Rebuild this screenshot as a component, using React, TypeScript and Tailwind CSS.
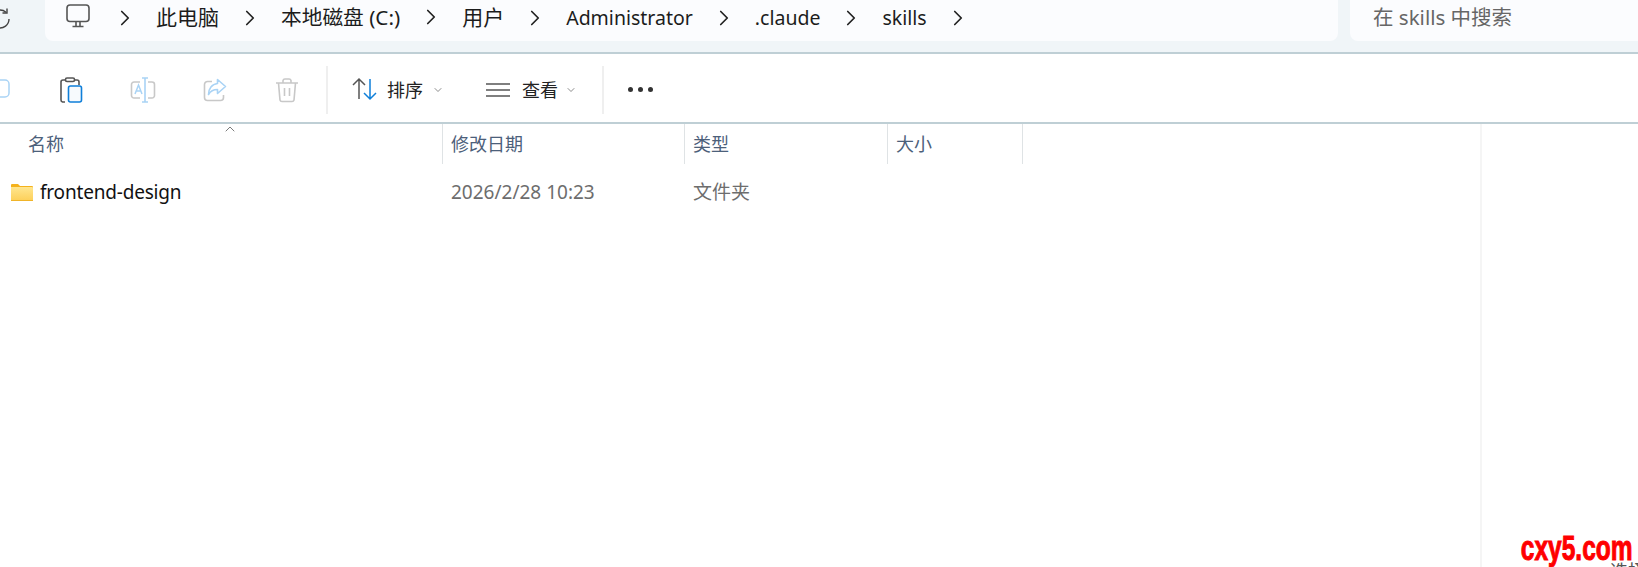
import { ChevronRight, ChevronDown, ChevronUp } from "lucide-react";

const crumbs = [
  { label: "此电脑", size: "text-[21px]" },
  { label: "本地磁盘 (C:)", size: "text-[20.700px]" },
  { label: "用户", size: "text-[21px]" },
  { label: "Administrator", size: "text-[19.500px]" },
  { label: ".claude", size: "text-[19.500px]" },
  { label: "skills", size: "text-[19.500px]" },
];

const columns = [
  { label: "修改日期", width: "w-[242px]" },
  { label: "类型", width: "w-[203px]" },
  { label: "大小", width: "w-[135px]" },
];

function Crumb() {
  return <ChevronRight className="w-[26px] h-[26px] -mx-[9px] text-[#222]" strokeWidth={1.6} />;
}

function ToolIcon({ children }: { children: React.ReactNode }) {
  return <svg width="26" height="26" viewBox="0 0 26 26" fill="none" strokeWidth="1.6">{children}</svg>;
}

export default function App() {
  return (
    <div className="relative w-[1638px] h-[567px] overflow-hidden bg-white flex flex-col font-['Noto_Sans','Noto_Sans_CJK_SC',sans-serif]">
      {/* address bar */}
      <div className="h-[54px] shrink-0 flex bg-[#f0f5f8] border-b-2 border-[#bfcfd5] pb-[11px]">
        <div className="w-[45px] shrink-0 overflow-hidden flex items-center">
          <svg width="26" height="26" viewBox="0 0 26 26" fill="none" stroke="#444" strokeWidth="1.4" className="-ml-[13px] mb-[3px]">
            <path d="M22 13a9 9 0 1 1-3-6.700" />
            <path d="M20 2.500v4.500h-4.500" />
          </svg>
        </div>
        <div className="w-[1293px] shrink-0 flex items-center gap-[27px] pl-[21px] pb-[6px] bg-[#fbfcfe] rounded-b-lg text-[#1c1c1c]">
          <svg width="24" height="24" viewBox="0 0 24 24" fill="none" stroke="#555" strokeWidth="1.600" className="mr-[4px] mb-[3px]">
            <rect x="1" y="1" width="22" height="16.500" rx="3" />
            <path d="M10 17.500v4.500M14 17.500v4.500M6.500 22.500h11" />
          </svg>
          <Crumb />
          {crumbs.map((c) => (
            <div key={c.label} className="flex items-center gap-[27px]">
              <span className={c.size}>{c.label}</span>
              <Crumb />
            </div>
          ))}
        </div>
        <div className="flex-1 ml-3 flex items-center pl-[23px] pb-[7px] bg-[#fbfcfe] rounded-bl-lg text-[20.500px] text-[#666]">
          在 skills 中搜索
        </div>
      </div>

      {/* command bar */}
      <div className="h-[70px] shrink-0 flex items-center pt-[3px] border-b-2 border-[#bfcfd5] text-[18px] text-[#222]">
        <div className="w-[328px] shrink-0 flex items-center overflow-hidden gap-[46px] pl-[58px] relative h-[48px] border-r-2 border-[#efefef]">
          <svg width="26" height="26" viewBox="0 0 26 26" fill="none" stroke="#a9d3f5" strokeWidth="1.5" className="absolute -left-[16px] top-[11px]">
            <rect x="4" y="3" width="21" height="17" rx="4" />
            <path d="M8 20v4" stroke="#ccc" />
          </svg>
          <ToolIcon>
            <path d="M7 25H4.500A2 2 0 0 1 3 23V5a2 2 0 0 1 2-2h14a2 2 0 0 1 2 2v3" stroke="#555" />
            <rect x="7.500" y="1" width="9" height="3.500" rx="1.500" stroke="#555" fill="#fff" />
            <rect x="10.500" y="9" width="13" height="16" rx="2" stroke="#0f7fd9" fill="#f7fafd" />
          </ToolIcon>
          <ToolIcon>
            <path d="M10 5H4a2.500 2.500 0 0 0-2.500 2.500v11A2.500 2.500 0 0 0 4 21h6M18 5h4a2.500 2.500 0 0 1 2.500 2.500v11A2.500 2.500 0 0 1 22 21h-4" stroke="#c8c8c8" />
            <path d="M15 1v24M12 1h6M12 25h6" stroke="#a9d3f5" />
            <path d="M5 17l3.500-9 3.500 9M6.200 14h4.600" stroke="#a9d3f5" strokeWidth="1.500" />
          </ToolIcon>
          <ToolIcon>
            <path d="M10 4.500H5.500a3 3 0 0 0-3 3v13a3 3 0 0 0 3 3h13a3 3 0 0 0 3-3V18" stroke="#c8c8c8" />
            <path d="M15.500 2.500l8 7-8 7v-4c-4 0-7 1.500-9 5 0-6 3.500-10.500 9-11z" stroke="#a9d3f5" strokeLinejoin="round" />
          </ToolIcon>
          <ToolIcon>
            <path d="M2 6h22M9 6V3.500A2 2 0 0 1 11 2h4a2 2 0 0 1 2 1.500V6M4.500 6l1.500 17a2 2 0 0 0 2 1.500h10a2 2 0 0 0 2-1.500L21.500 6M10.500 11v8M15.500 11v8" stroke="#c8c8c8" />
          </ToolIcon>
        </div>

        <div className="w-[276px] shrink-0 h-[48px] flex items-center border-r-2 border-[#efefef]">
          <svg width="26" height="24" viewBox="0 0 26 24" fill="none" strokeWidth="1.5" className="ml-[24px] -mt-[2px]">
            <path d="M7 22V2M1 8l6-6 6 6" stroke="#555" />
            <path d="M18 2v20M12 16l6 6 6-6" stroke="#0f7fd9" />
          </svg>
          <span className="ml-[9px] mt-[1px]">排序</span>
          <ChevronDown className="w-[12px] h-[12px] ml-[9px] text-[#666]" strokeWidth={1.5} />
          <svg width="24" height="16" viewBox="0 0 24 16" fill="none" stroke="#555" strokeWidth="1.700" className="ml-[42px]">
            <path d="M0 2h24M0 8h24M0 14h24" />
          </svg>
          <span className="ml-[12px] mt-[1px]">查看</span>
          <ChevronDown className="w-[12px] h-[12px] ml-[7px] text-[#666]" strokeWidth={1.5} />
        </div>

        <div className="ml-[24px] flex items-center gap-[5px]">
          <span className="w-[5px] h-[5px] rounded-full bg-[#333]" />
          <span className="w-[5px] h-[5px] rounded-full bg-[#333]" />
          <span className="w-[5px] h-[5px] rounded-full bg-[#333]" />
        </div>
      </div>

      {/* file list + preview pane */}
      <div className="flex-1 flex">
        <div className="w-[1482px] shrink-0 border-r-2 border-[#f5f5f5]">
          <div className="h-[40px] flex text-[18px] text-[#4c607a]">
            <div className="relative w-[443px] shrink-0 flex items-center pl-[28px] border-r border-[#dfe3e5]">
              名称
              <ChevronUp className="absolute left-[222px] -top-[3px] w-[16px] h-[16px] text-[#666]" strokeWidth={1.3} />
            </div>
            {columns.map((col) => (
              <div key={col.label} className={`${col.width} shrink-0 flex items-center pl-[8px] border-r border-[#dfe3e5]`}>
                {col.label}
              </div>
            ))}
          </div>
          <div className="h-[56px] flex items-center text-[19px]">
            <div className="w-[443px] shrink-0 flex items-center pl-[11px] text-[#111]">
              <svg width="22" height="18" viewBox="0 0 22 18">
                <defs>
                  <linearGradient id="folder" x1="0" y1="0" x2="0" y2="1">
                    <stop offset="0" stopColor="#ffe68f" />
                    <stop offset="1" stopColor="#fdcf58" />
                  </linearGradient>
                </defs>
                <path d="M0 2a1 1 0 0 1 1-1h6l2 2h12a1 1 0 0 1 1 1v3H0z" fill="#f5b21c" />
                <path d="M0 4h21a1 1 0 0 1 1 1v12a1 1 0 0 1-1 1H1a1 1 0 0 1-1-1z" fill="url(#folder)" />
                <path d="M0 17.500h22" stroke="#f0b429" />
              </svg>
              <span className="ml-[7px] tracking-[-0.01em]">frontend-design</span>
            </div>
            <div className="w-[242px] shrink-0 pl-[8px] text-[#6d6d6d]">2026/2/28 10:23</div>
            <div className="pl-[8px] text-[#6d6d6d]">文件夹</div>
          </div>
        </div>
        <div className="flex-1 overflow-hidden pl-[128px] pt-[435px] whitespace-nowrap text-[18px] leading-[24px] text-[#555]">
          选择要预览的文件
        </div>
      </div>

      {/* site watermark */}
      <div className="absolute right-[5px] bottom-[1px] origin-right scale-x-[0.7] font-['Liberation_Sans'] font-bold text-[35px] leading-[36px] text-[#ff0000] [-webkit-text-stroke:1px_#ff0000]">
        cxy5.com
      </div>
    </div>
  );
}
